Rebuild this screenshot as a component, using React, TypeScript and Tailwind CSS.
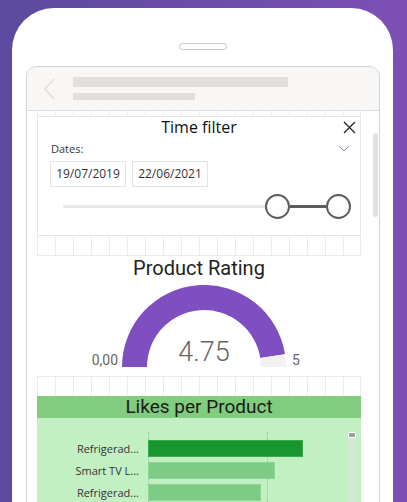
import React from "react";

const sans = { fontFamily: '"Open Sans", "Liberation Sans", sans-serif' };
const din = { fontFamily: 'Roboto, "Liberation Sans", sans-serif' };

function GridRow({ h, top = false, bottom = false }: { h: string; top?: boolean; bottom?: boolean }) {
  const cells = Array.from({ length: 18 });
  return (
    <div className={`flex w-[324px] ${h}`}>
      {cells.map((_, i) => (
        <div
          key={i}
          className={`w-[18px] h-full border-l border-[#ebebeb] ${top ? "border-t" : ""} ${bottom ? "border-b" : ""} ${i === 17 ? "border-r" : ""}`}
        />
      ))}
    </div>
  );
}

function TimeFilter() {
  return (
    <div className="relative w-[324px] h-[120px] border border-[#e6e6e6] bg-white" style={sans}>
      <div className="text-center text-[16px] leading-[20px] text-[#111]">Time filter</div>
      <svg className="absolute right-[4px] top-[4px]" width="13" height="13" viewBox="0 0 13 13">
        <path d="M1 1 L12 12 M12 1 L1 12" stroke="#222" strokeWidth="1.3" fill="none" />
      </svg>
      <div className="mt-[5px] flex items-center justify-between pl-[13px] pr-[11px]">
        <span className="text-[11px] leading-[14px] text-[#333]">Dates:</span>
        <svg width="10" height="6" viewBox="0 0 10 6">
          <path d="M0.5 0.5 L5 5 L9.5 0.5" stroke="#7a8aa8" strokeWidth="1" fill="none" />
        </svg>
      </div>
      <div className="mt-[5px] flex gap-[6px] pl-[12px]">
        <div className="flex h-[26px] w-[76px] items-center justify-center border border-[#e3e3e3] text-[12px] text-[#333]">
          19/07/2019
        </div>
        <div className="flex h-[26px] w-[76px] items-center justify-center border border-[#e3e3e3] text-[12px] text-[#333]">
          22/06/2021
        </div>
      </div>
      <div className="mt-[7px] flex items-center pl-[25px]">
        <div className="h-[3px] w-[202px] bg-[#e8e8e8]" />
        <div className="h-[25px] w-[25px] rounded-full border-2 border-[#5c5c5c] bg-white" />
        <div className="h-[3px] w-[36px] bg-[#5c5c5c]" />
        <div className="h-[25px] w-[25px] rounded-full border-2 border-[#5c5c5c] bg-white" />
      </div>
    </div>
  );
}

function Gauge() {
  return (
    <div className="h-[120px] w-[324px] bg-white">
      <div className="text-center text-[20px] leading-[24px] text-[#222]" style={din}>
        Product Rating
      </div>
      <div className="mt-[5px] flex items-end" style={din}>
        <div className="w-[85px] pr-[4px] text-right text-[14px] leading-none text-[#666]">0,00</div>
        <div className="relative h-[82px] w-[164px]">
          <svg width="164" height="82" viewBox="0 0 164 82">
            <path d="M 0 82 A 82 82 0 0 1 163.0 69.17 L 138.3 73.08 A 57 57 0 0 0 25 82 Z" fill="#7f4fc1" />
            <path d="M 163.0 69.17 A 82 82 0 0 1 164 82 L 139 82 A 57 57 0 0 0 138.3 73.08 Z" fill="#f2f1f0" />
          </svg>
          <div className="absolute left-0 right-0 top-[54px] text-center text-[27px] font-light leading-none text-[#666]">
            4.75
          </div>
        </div>
        <div className="pl-[6px] text-[14px] leading-none text-[#666]">5</div>
      </div>
    </div>
  );
}

function Likes() {
  const rows = [
    { label: "Refrigerad...", w: 155, c: "bg-[#18962f] border-[#3aa84e]" },
    { label: "Smart TV L...", w: 127, c: "bg-[#7dcb85] border-[#8ed495]" },
    { label: "Refrigerad...", w: 113, c: "bg-[#7dcb85] border-[#8ed495]" },
  ];
  return (
    <div className="w-[324px]">
      <div className="h-[22px] bg-[#82cc7f] text-center text-[19px] leading-[22px] text-[#1a1a1a]" style={din}>
        Likes per Product
      </div>
      <div className="flex h-[100px] bg-[#c3f0c3] pt-[14px]">
        <div className="relative flex-1">
          <div className="absolute left-[111px] top-0 h-full border-l border-dotted border-[#a9b9a9]" />
          <div className="absolute left-[230px] top-0 h-full border-l border-dotted border-[#a9b9a9]" />
          <div className="flex flex-col gap-[5px] pt-[8px]">
            {rows.map((r, i) => (
              <div key={i} className="flex h-[17px] items-center">
                <div className="w-[102px] pr-0 text-right text-[11px] leading-none text-[#333]" style={sans}>
                  {r.label}
                </div>
                <div className="w-[9px]" />
                <div className={`relative h-[17px] border ${r.c}`} style={{ width: r.w }} />
              </div>
            ))}
          </div>
        </div>
        <div className="mr-[5px] flex w-[8px] flex-col bg-[#d5e8d5]">
          <div className="h-[6px] rounded-[2px] border border-white bg-[#9aa09a]" />
        </div>
      </div>
    </div>
  );
}

export default function App() {
  return (
    <div className="h-[502px] w-[407px] overflow-hidden bg-gradient-to-r from-[#5b4a9e] to-[#7d4fb5] pl-[12px] pt-[8px]">
      <div className="h-[600px] w-[381px] rounded-t-[42px] bg-white pt-[35px]">
        <div className="mx-auto h-[7px] w-[48px] rounded-full border border-[#c8c8c8]" />
        <div className="ml-[14px] mt-[16px] h-[600px] w-[354px] rounded-t-[10px] border border-[#d5d5d5] bg-white">
          <div className="flex h-[44px] items-center rounded-t-[10px] border-b border-[#dcdcdc] bg-[#f8f7f6]">
            <svg className="ml-[17px]" width="11" height="22" viewBox="0 0 11 22">
              <path d="M10 1 L1 11 L10 21" stroke="#e0dedc" strokeWidth="1.5" fill="none" />
            </svg>
            <div className="ml-[18px] flex flex-col gap-[6px]">
              <div className="h-[10px] w-[215px] bg-[#e1dfdd]" />
              <div className="h-[7px] w-[122px] bg-[#e1dfdd]" />
            </div>
          </div>
          <div className="relative pl-[10px]">
            <div className="absolute right-[1px] top-[22px] h-[84px] w-[5px] rounded-full bg-[#e1e1e1]" />
            <GridRow h="h-[5px]" />
            <TimeFilter />
            <GridRow h="h-[20px]" bottom />
            <Gauge />
            <GridRow h="h-[20px]" top />
            <Likes />
          </div>
        </div>
      </div>
    </div>
  );
}
